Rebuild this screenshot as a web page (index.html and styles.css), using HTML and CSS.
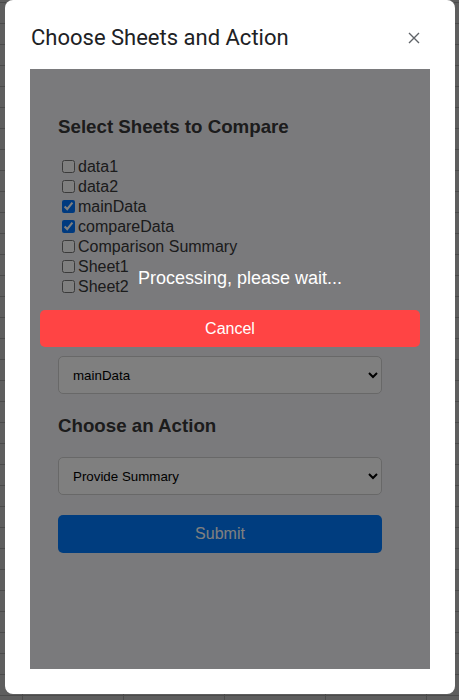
FILE: index.html
```html
<!DOCTYPE html>
<html lang="en">
<head>
<meta charset="utf-8">
<title>Choose Sheets and Action</title>
<link rel="stylesheet" href="styles.css">
</head>
<body>
<div class="dialog">
  <div class="dialog-header">
    <div class="dialog-title">Choose Sheets and Action</div>
    <button class="close-btn" aria-label="Close">
      <svg width="12" height="12" viewBox="0 0 12 12"><path d="M1 1L11 11M11 1L1 11" stroke="#5f6368" stroke-width="1.4" fill="none"/></svg>
    </button>
  </div>
  <div class="frame">
    <div class="content">
      <h3 class="heading first">Select Sheets to Compare</h3>
      <div class="sheet-list">
        <label class="row"><input type="checkbox"><span>data1</span></label>
        <label class="row"><input type="checkbox"><span>data2</span></label>
        <label class="row"><input type="checkbox" checked><span>mainData</span></label>
        <label class="row"><input type="checkbox" checked><span>compareData</span></label>
        <label class="row"><input type="checkbox"><span>Comparison Summary</span></label>
        <label class="row"><input type="checkbox"><span>Sheet1</span></label>
        <label class="row"><input type="checkbox"><span>Sheet2</span></label>
      </div>
      <select class="field main-select">
        <option>mainData</option>
        <option>compareData</option>
      </select>
      <h3 class="heading action">Choose an Action</h3>
      <select class="field">
        <option>Provide Summary</option>
      </select>
      <button class="submit">Submit</button>
    </div>
    <div class="overlay">
      <div class="overlay-msg">Processing, please wait...</div>
      <button class="cancel">Cancel</button>
    </div>
  </div>
</div>
</body>
</html>
```
FILE: styles.css
```css
html, body {
  margin: 0;
  padding: 0;
}
body {
  width: 459px;
  height: 700px;
  overflow: hidden;
  background-color: #5e5e5e;
  background-image:
    linear-gradient(to right, #4b4b4b 1px, transparent 1px),
    linear-gradient(to bottom, #4b4b4b 1px, transparent 1px);
  background-size: 101px 100%, 100% 21px;
  background-position: 22px 0, 0 2px;
  font-family: "Liberation Sans", Arial, sans-serif;
}
.dialog {
  margin-left: 5px;
  width: 450px;
  height: 694px;
  box-sizing: border-box;
  padding: 0 25px;
  background: #fff;
  border-radius: 8px;
}
.dialog-header {
  display: flex;
  align-items: center;
  justify-content: space-between;
  padding: 22px 0 15px;
}
.dialog-title {
  font-family: Roboto, "Open Sans", sans-serif;
  font-size: 22px;
  line-height: 32px;
  color: #202124;
  margin-left: 1px;
}
.close-btn {
  width: 24px;
  height: 24px;
  margin-right: 4px;
  padding: 0;
  border: 0;
  background: transparent;
  display: flex;
  align-items: center;
  justify-content: center;
}
.frame {
  position: relative;
  width: 400px;
  height: 600px;
  overflow: hidden;
  background: #f4f4f8;
}
.content {
  padding: 28px;
  color: #383838;
}
.heading {
  font-size: 18.72px;
  line-height: 21.5px;
  font-weight: bold;
  margin: 0;
}
.heading.first {
  margin: 19px 0;
}
.heading.action {
  margin: 21px 0 20.5px;
}
.sheet-list {
  display: flex;
  flex-direction: column;
}
.row {
  display: flex;
  align-items: center;
  height: 20px;
  font-size: 16px;
}
.row input {
  width: 13px;
  height: 13px;
  margin: 0 3px 0 4px;
}
.field {
  display: block;
  width: 324px;
  height: 38px;
  box-sizing: border-box;
  padding: 0 10px;
  border: 1px solid #d0d0d0;
  border-radius: 5px;
  background: #fff;
  color: #000;
  font-family: "Liberation Sans", Arial, sans-serif;
  font-size: 13.333px;
}
.main-select {
  margin-top: 59.5px;
}
.submit {
  display: block;
  margin-top: 20px;
  width: 324px;
  height: 38px;
  border: 0;
  border-radius: 5px;
  background: #007bff;
  color: #fff;
  font-family: "Liberation Sans", Arial, sans-serif;
  font-size: 16px;
}
.overlay {
  position: absolute;
  inset: 0;
  background: rgba(0, 0, 0, 0.5);
  padding-top: 199px;
}
.overlay-msg {
  padding-left: 20px;
  text-align: center;
  color: #fff;
  font-size: 18px;
  line-height: 21px;
}
.cancel {
  display: block;
  margin: 21px 10px 0;
  width: 380px;
  height: 37px;
  border: 0;
  border-radius: 5px;
  background: #ff4444;
  color: #fff;
  font-family: "Liberation Sans", Arial, sans-serif;
  font-size: 16px;
}
```
